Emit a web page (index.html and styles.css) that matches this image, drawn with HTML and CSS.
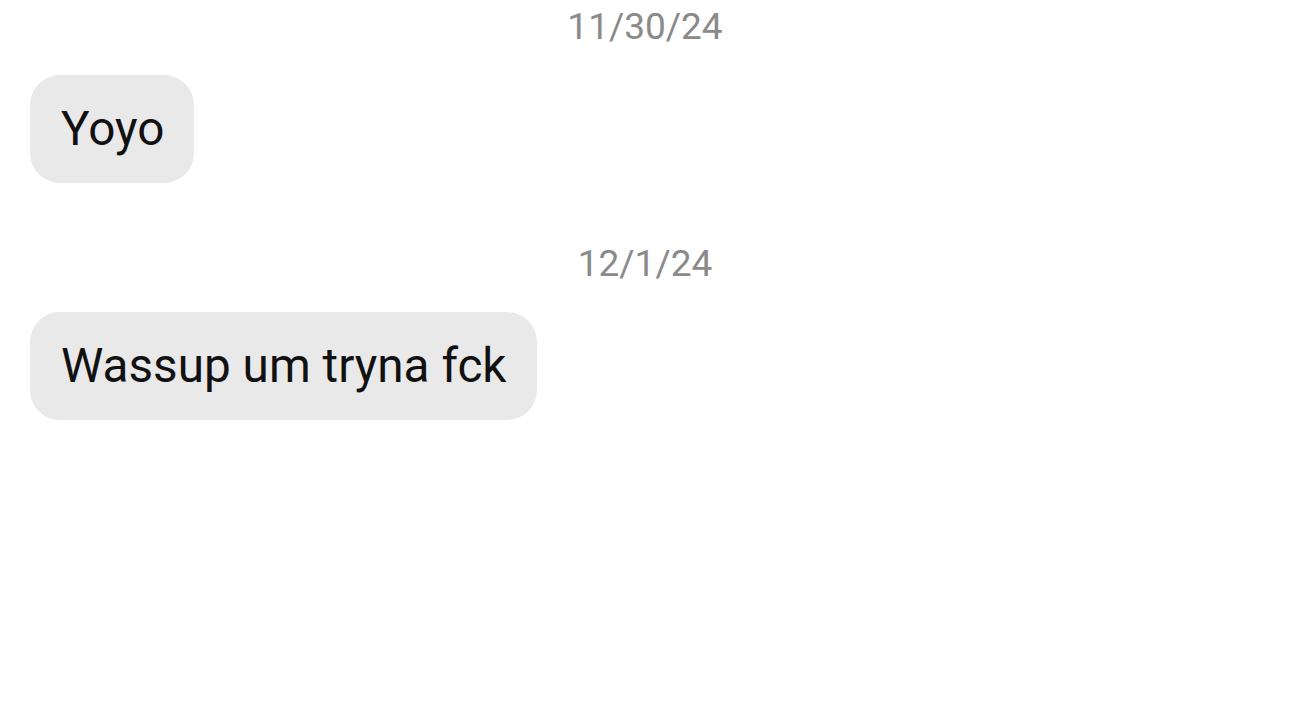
FILE: index.html
```html
<!DOCTYPE html>
<html>
<head>
<meta charset="utf-8">
<link rel="stylesheet" href="styles.css">
</head>
<body>
<div class="thread">
  <div class="date date-first">11/30/24</div>
  <div class="row"><div class="bubble">Yoyo</div></div>
  <div class="date date-second">12/1/24</div>
  <div class="row"><div class="bubble">Wassup um tryna fck</div></div>
</div>
</body>
</html>
```
FILE: styles.css
```css
html, body {
  margin: 0;
  padding: 0;
  background: #ffffff;
}
body {
  width: 1290px;
  height: 708px;
  overflow: hidden;
  font-family: Roboto, "Liberation Sans", Arial, sans-serif;
}
.thread {
  display: flex;
  flex-direction: column;
  padding: 0 30px;
}
.date {
  text-align: center;
  color: #8a8a8a;
  font-size: 37px;
  line-height: 44px;
}
.date-first {
  margin-top: 5px;
}
.date-second {
  margin-top: 59px;
}
.row {
  display: flex;
  margin-top: 26px;
}
.bubble {
  background: #e9e9e9;
  color: #111111;
  font-size: 47.7px;
  line-height: 108px;
  height: 108px;
  padding: 0 30px 0 31px;
  border-radius: 30px;
}
```
